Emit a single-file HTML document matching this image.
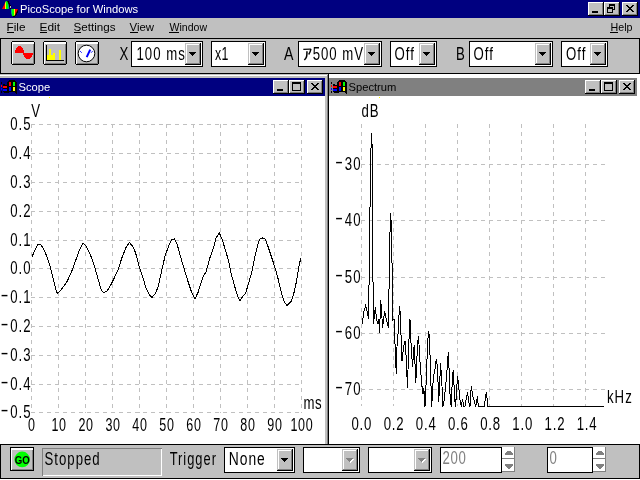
<!DOCTYPE html>
<html lang="en"><head><meta charset="utf-8"><title>PicoScope for Windows</title>
<style>
html,body{margin:0;padding:0;background:#fff;}
body{width:640px;height:480px;overflow:hidden;}
svg{display:block;font-family:'Liberation Sans', 'IPAGothic', 'Noto Sans CJK JP', sans-serif;}
text{white-space:pre;}
</style></head><body>
<svg width="640" height="480" viewBox="0 0 640 480">
<rect x="0" y="0" width="640" height="480" fill="#fff"/>
<rect x="0" y="0" width="640" height="18" fill="#000080"/>
<g shape-rendering="crispEdges">
<clipPath id="h1"><path d="M2 9 L3 7 L4 5 L5 3 L6 1 L7 1 L8 3 L9 6 L9 9 Z"/></clipPath>
<clipPath id="h2"><path d="M11 9 L18 9 L17 11 L16 13 L15 15 L14 16 L12 16 L11 13 Z"/></clipPath>
<path d="M7 1 L8 1 L9 2 L10 4 L11 6 L11 9 L18 9 L18 12 L17 14 L15 17 L13 17 L12 16 L16 10 L10 9 L9 5 Z" fill="#000"/>
<g clip-path="url(#h1)"><rect x="2" y="0" width="3" height="10" fill="#f00"/><rect x="5" y="0" width="1" height="10" fill="#ff0"/><rect x="6" y="0" width="2" height="10" fill="#0f0"/><rect x="8" y="0" width="1" height="10" fill="#0a8"/></g>
<g clip-path="url(#h2)"><rect x="11" y="8" width="1" height="10" fill="#0a8"/><rect x="12" y="8" width="2" height="10" fill="#0f0"/><rect x="14" y="8" width="1" height="10" fill="#ff0"/><rect x="15" y="8" width="3" height="10" fill="#f00"/></g>
<rect x="10" y="6" width="1" height="2" fill="#c0c0c0"/>
</g>
<g shape-rendering="crispEdges">
<rect x="588" y="2" width="16" height="14" fill="#000"/>
<rect x="588" y="2" width="15" height="13" fill="#fff"/>
<rect x="589" y="3" width="14" height="12" fill="#808080"/>
<rect x="589" y="3" width="13" height="11" fill="#c0c0c0"/>
<rect x="592" y="11" width="6" height="2" fill="#000"/>
<rect x="604" y="2" width="16" height="14" fill="#000"/>
<rect x="604" y="2" width="15" height="13" fill="#fff"/>
<rect x="605" y="3" width="14" height="12" fill="#808080"/>
<rect x="605" y="3" width="13" height="11" fill="#c0c0c0"/>
<rect x="609" y="4" width="6" height="6" fill="#000"/>
<rect x="610" y="6" width="4" height="3" fill="#c0c0c0"/>
<rect x="607" y="7" width="6" height="6" fill="#000"/>
<rect x="608" y="9" width="4" height="3" fill="#c0c0c0"/>
<rect x="622" y="2" width="16" height="14" fill="#000"/>
<rect x="622" y="2" width="15" height="13" fill="#fff"/>
<rect x="623" y="3" width="14" height="12" fill="#808080"/>
<rect x="623" y="3" width="13" height="11" fill="#c0c0c0"/>
<rect x="626" y="5" width="2" height="1" fill="#000"/>
<rect x="632" y="5" width="2" height="1" fill="#000"/>
<rect x="627" y="6" width="2" height="1" fill="#000"/>
<rect x="631" y="6" width="2" height="1" fill="#000"/>
<rect x="628" y="7" width="4" height="1" fill="#000"/>
<rect x="629" y="8" width="2" height="1" fill="#000"/>
<rect x="628" y="9" width="4" height="1" fill="#000"/>
<rect x="627" y="10" width="2" height="1" fill="#000"/>
<rect x="631" y="10" width="2" height="1" fill="#000"/>
<rect x="626" y="11" width="2" height="1" fill="#000"/>
<rect x="632" y="11" width="2" height="1" fill="#000"/>
</g>
<rect x="0" y="18" width="640" height="20" fill="#c0c0c0"/>
<rect x="7" y="32" width="7" height="1" fill="#000"/>
<rect x="40" y="32" width="7" height="1" fill="#000"/>
<rect x="74" y="32" width="7" height="1" fill="#000"/>
<rect x="130" y="32" width="8" height="1" fill="#000"/>
<rect x="169" y="32" width="10" height="1" fill="#000"/>
<rect x="610" y="32" width="8" height="1" fill="#000"/>
<g shape-rendering="crispEdges">
<rect x="0" y="38" width="640" height="36" fill="#000"/>
<rect x="1" y="39" width="638" height="34" fill="#c0c0c0"/>
<rect x="12" y="41" width="22" height="24" fill="#000"/>
<rect x="11" y="42" width="24" height="22" fill="#000"/>
<rect x="12" y="42" width="22" height="22" fill="#fff"/>
<rect x="13" y="44" width="21" height="20" fill="#808080"/>
<rect x="13" y="44" width="20" height="19" fill="#c0c0c0"/>
<rect x="44" y="41" width="22" height="24" fill="#000"/>
<rect x="43" y="42" width="24" height="22" fill="#000"/>
<rect x="44" y="42" width="22" height="22" fill="#fff"/>
<rect x="45" y="44" width="21" height="20" fill="#808080"/>
<rect x="45" y="44" width="20" height="19" fill="#c0c0c0"/>
<rect x="76" y="41" width="22" height="24" fill="#000"/>
<rect x="75" y="42" width="24" height="22" fill="#000"/>
<rect x="76" y="42" width="22" height="22" fill="#fff"/>
<rect x="77" y="44" width="21" height="20" fill="#808080"/>
<rect x="77" y="44" width="20" height="19" fill="#c0c0c0"/>
<path d="M15 53V50h1V48h1V47h1V46h3V47h1V48h1V50h1V53h9V55h-1V57h-1V58h-1V59h-4V58h-1V57h-1V55h-1V53z" fill="#f00"/>
<rect x="46" y="45" width="1" height="16" fill="#000"/>
<rect x="46" y="60" width="18" height="1" fill="#000"/>
<rect x="47" y="55" width="8" height="5" fill="#ff0"/>
<rect x="49" y="49" width="2" height="6" fill="#ff0"/>
<rect x="53" y="53" width="2" height="2" fill="#ff0"/>
<rect x="59" y="50" width="2" height="10" fill="#ff0"/>
</g>
<circle cx="86.5" cy="53.5" r="8.3" fill="#fff" stroke="#000" stroke-width="1"/>
<path d="M86.7 57.2L90.2 49.6" stroke="#00f" stroke-width="2" fill="none"/>
<path d="M80.2 51.2l1.5 1.5M92.6 51.2l-1.5 1.5" stroke="#00f" stroke-width="1" fill="none"/>
<g shape-rendering="crispEdges">
<rect x="131" y="41" width="72" height="26" fill="#000"/>
<rect x="132" y="42" width="70" height="24" fill="#fff"/>
<rect x="185" y="43" width="16" height="22" fill="#000"/>
<rect x="185" y="43" width="15" height="21" fill="#c0c0c0"/>
<rect x="186" y="44" width="14" height="20" fill="#808080"/>
<rect x="186" y="44" width="13" height="19" fill="#fff"/>
<rect x="187" y="45" width="12" height="18" fill="#c0c0c0"/>
<rect x="189" y="52" width="7" height="1" fill="#000"/>
<rect x="190" y="53" width="5" height="1" fill="#000"/>
<rect x="191" y="54" width="3" height="1" fill="#000"/>
<rect x="192" y="55" width="1" height="1" fill="#000"/>
<rect x="211" y="41" width="55" height="26" fill="#000"/>
<rect x="212" y="42" width="53" height="24" fill="#fff"/>
<rect x="248" y="43" width="16" height="22" fill="#000"/>
<rect x="248" y="43" width="15" height="21" fill="#c0c0c0"/>
<rect x="249" y="44" width="14" height="20" fill="#808080"/>
<rect x="249" y="44" width="13" height="19" fill="#fff"/>
<rect x="250" y="45" width="12" height="18" fill="#c0c0c0"/>
<rect x="252" y="52" width="7" height="1" fill="#000"/>
<rect x="253" y="53" width="5" height="1" fill="#000"/>
<rect x="254" y="54" width="3" height="1" fill="#000"/>
<rect x="255" y="55" width="1" height="1" fill="#000"/>
<rect x="298" y="41" width="84" height="26" fill="#000"/>
<rect x="299" y="42" width="82" height="24" fill="#fff"/>
<rect x="364" y="43" width="16" height="22" fill="#000"/>
<rect x="364" y="43" width="15" height="21" fill="#c0c0c0"/>
<rect x="365" y="44" width="14" height="20" fill="#808080"/>
<rect x="365" y="44" width="13" height="19" fill="#fff"/>
<rect x="366" y="45" width="12" height="18" fill="#c0c0c0"/>
<rect x="368" y="52" width="7" height="1" fill="#000"/>
<rect x="369" y="53" width="5" height="1" fill="#000"/>
<rect x="370" y="54" width="3" height="1" fill="#000"/>
<rect x="371" y="55" width="1" height="1" fill="#000"/>
<rect x="390" y="41" width="47" height="26" fill="#000"/>
<rect x="391" y="42" width="45" height="24" fill="#fff"/>
<rect x="419" y="43" width="16" height="22" fill="#000"/>
<rect x="419" y="43" width="15" height="21" fill="#c0c0c0"/>
<rect x="420" y="44" width="14" height="20" fill="#808080"/>
<rect x="420" y="44" width="13" height="19" fill="#fff"/>
<rect x="421" y="45" width="12" height="18" fill="#c0c0c0"/>
<rect x="423" y="52" width="7" height="1" fill="#000"/>
<rect x="424" y="53" width="5" height="1" fill="#000"/>
<rect x="425" y="54" width="3" height="1" fill="#000"/>
<rect x="426" y="55" width="1" height="1" fill="#000"/>
<rect x="469" y="41" width="84" height="26" fill="#000"/>
<rect x="470" y="42" width="82" height="24" fill="#fff"/>
<rect x="535" y="43" width="16" height="22" fill="#000"/>
<rect x="535" y="43" width="15" height="21" fill="#c0c0c0"/>
<rect x="536" y="44" width="14" height="20" fill="#808080"/>
<rect x="536" y="44" width="13" height="19" fill="#fff"/>
<rect x="537" y="45" width="12" height="18" fill="#c0c0c0"/>
<rect x="539" y="52" width="7" height="1" fill="#000"/>
<rect x="540" y="53" width="5" height="1" fill="#000"/>
<rect x="541" y="54" width="3" height="1" fill="#000"/>
<rect x="542" y="55" width="1" height="1" fill="#000"/>
<rect x="561" y="41" width="47" height="26" fill="#000"/>
<rect x="562" y="42" width="45" height="24" fill="#fff"/>
<rect x="590" y="43" width="16" height="22" fill="#000"/>
<rect x="590" y="43" width="15" height="21" fill="#c0c0c0"/>
<rect x="591" y="44" width="14" height="20" fill="#808080"/>
<rect x="591" y="44" width="13" height="19" fill="#fff"/>
<rect x="592" y="45" width="12" height="18" fill="#c0c0c0"/>
<rect x="594" y="52" width="7" height="1" fill="#000"/>
<rect x="595" y="53" width="5" height="1" fill="#000"/>
<rect x="596" y="54" width="3" height="1" fill="#000"/>
<rect x="597" y="55" width="1" height="1" fill="#000"/>
</g>
<g shape-rendering="crispEdges">
<rect x="329" y="78" width="308" height="18" fill="#808080"/>
<rect x="0" y="74" width="329" height="370" fill="#000"/>
<rect x="0" y="74" width="328" height="370" fill="#c0c0c0"/>
<rect x="0" y="75" width="327" height="369" fill="#fff"/>
<rect x="0" y="76" width="327" height="368" fill="#808080"/>
<rect x="0" y="76" width="327" height="368" fill="#c0c0c0"/>
<rect x="327" y="75" width="1" height="369" fill="#808080"/>
<rect x="0" y="75" width="327" height="1" fill="#fff"/>
<rect x="0" y="78" width="325" height="18" fill="#000080"/>
<rect x="0" y="96" width="325" height="348" fill="#fff"/>
<rect x="273" y="80" width="16" height="14" fill="#000"/>
<rect x="273" y="80" width="15" height="13" fill="#fff"/>
<rect x="274" y="81" width="14" height="12" fill="#808080"/>
<rect x="274" y="81" width="13" height="11" fill="#c0c0c0"/>
<rect x="277" y="89" width="6" height="2" fill="#000"/>
<rect x="289" y="80" width="16" height="14" fill="#000"/>
<rect x="289" y="80" width="15" height="13" fill="#fff"/>
<rect x="290" y="81" width="14" height="12" fill="#808080"/>
<rect x="290" y="81" width="13" height="11" fill="#c0c0c0"/>
<rect x="292" y="82" width="9" height="9" fill="#000"/>
<rect x="293" y="84" width="7" height="6" fill="#c0c0c0"/>
<rect x="307" y="80" width="16" height="14" fill="#000"/>
<rect x="307" y="80" width="15" height="13" fill="#fff"/>
<rect x="308" y="81" width="14" height="12" fill="#808080"/>
<rect x="308" y="81" width="13" height="11" fill="#c0c0c0"/>
<rect x="311" y="83" width="2" height="1" fill="#000"/>
<rect x="317" y="83" width="2" height="1" fill="#000"/>
<rect x="312" y="84" width="2" height="1" fill="#000"/>
<rect x="316" y="84" width="2" height="1" fill="#000"/>
<rect x="313" y="85" width="4" height="1" fill="#000"/>
<rect x="314" y="86" width="2" height="1" fill="#000"/>
<rect x="313" y="87" width="4" height="1" fill="#000"/>
<rect x="312" y="88" width="2" height="1" fill="#000"/>
<rect x="316" y="88" width="2" height="1" fill="#000"/>
<rect x="311" y="89" width="2" height="1" fill="#000"/>
<rect x="317" y="89" width="2" height="1" fill="#000"/>
<rect x="585" y="80" width="16" height="14" fill="#000"/>
<rect x="585" y="80" width="15" height="13" fill="#fff"/>
<rect x="586" y="81" width="14" height="12" fill="#808080"/>
<rect x="586" y="81" width="13" height="11" fill="#c0c0c0"/>
<rect x="589" y="89" width="6" height="2" fill="#000"/>
<rect x="601" y="80" width="16" height="14" fill="#000"/>
<rect x="601" y="80" width="15" height="13" fill="#fff"/>
<rect x="602" y="81" width="14" height="12" fill="#808080"/>
<rect x="602" y="81" width="13" height="11" fill="#c0c0c0"/>
<rect x="604" y="82" width="9" height="9" fill="#000"/>
<rect x="605" y="84" width="7" height="6" fill="#c0c0c0"/>
<rect x="619" y="80" width="16" height="14" fill="#000"/>
<rect x="619" y="80" width="15" height="13" fill="#fff"/>
<rect x="620" y="81" width="14" height="12" fill="#808080"/>
<rect x="620" y="81" width="13" height="11" fill="#c0c0c0"/>
<rect x="623" y="83" width="2" height="1" fill="#000"/>
<rect x="629" y="83" width="2" height="1" fill="#000"/>
<rect x="624" y="84" width="2" height="1" fill="#000"/>
<rect x="628" y="84" width="2" height="1" fill="#000"/>
<rect x="625" y="85" width="4" height="1" fill="#000"/>
<rect x="626" y="86" width="2" height="1" fill="#000"/>
<rect x="625" y="87" width="4" height="1" fill="#000"/>
<rect x="624" y="88" width="2" height="1" fill="#000"/>
<rect x="628" y="88" width="2" height="1" fill="#000"/>
<rect x="623" y="89" width="2" height="1" fill="#000"/>
<rect x="629" y="89" width="2" height="1" fill="#000"/>
<path d="M7 82L8 81L10 80L14 80L15 81L17 82V94L15 93L14 92L10 92L8 93L7 93Z" fill="#000"/>
<rect x="9" y="82" width="2" height="4" fill="#f00"/>
<rect x="13" y="82" width="2" height="4" fill="#0f0"/>
<rect x="9" y="87" width="2" height="4" fill="#00f"/>
<rect x="13" y="87" width="2" height="4" fill="#ff0"/>
<rect x="3" y="84" width="4" height="9" fill="#000"/>
<rect x="3" y="86" width="4" height="2" fill="#f00"/>
<rect x="3" y="89" width="4" height="2" fill="#00f"/>
<rect x="5" y="84" width="2" height="1" fill="#000080"/>
<rect x="3" y="92" width="1" height="1" fill="#000080"/>
<rect x="1" y="85" width="1" height="2" fill="#f00"/>
<rect x="1" y="88" width="1" height="2" fill="#00f"/>
<rect x="1" y="82" width="1" height="2" fill="#000"/>
<rect x="1" y="91" width="1" height="2" fill="#000"/>
<path d="M337 82L338 81L340 80L344 80L345 81L347 82V94L345 93L344 92L340 92L338 93L337 93Z" fill="#000"/>
<rect x="339" y="82" width="2" height="4" fill="#f00"/>
<rect x="343" y="82" width="2" height="4" fill="#0f0"/>
<rect x="339" y="87" width="2" height="4" fill="#00f"/>
<rect x="343" y="87" width="2" height="4" fill="#ff0"/>
<rect x="333" y="84" width="4" height="9" fill="#000"/>
<rect x="333" y="86" width="4" height="2" fill="#f00"/>
<rect x="333" y="89" width="4" height="2" fill="#00f"/>
<rect x="335" y="84" width="2" height="1" fill="#808080"/>
<rect x="333" y="92" width="1" height="1" fill="#808080"/>
<rect x="331" y="85" width="1" height="2" fill="#f00"/>
<rect x="331" y="88" width="1" height="2" fill="#00f"/>
<rect x="331" y="82" width="1" height="2" fill="#000"/>
<rect x="331" y="91" width="1" height="2" fill="#000"/>
</g>
<g shape-rendering="crispEdges" stroke="#c0c0c0" stroke-width="1" fill="none" stroke-dasharray="4 4">
<path d="M31.5 124V413"/>
<path d="M58.5 124V413"/>
<path d="M85.5 124V413"/>
<path d="M112.5 124V413"/>
<path d="M139.5 124V413"/>
<path d="M166.5 124V413"/>
<path d="M193.5 124V413"/>
<path d="M220.5 124V413"/>
<path d="M247.5 124V413"/>
<path d="M274.5 124V413"/>
<path d="M301.5 124V413"/>
<path d="M31 124.5H302"/>
<path d="M31 153.5H302"/>
<path d="M31 182.5H302"/>
<path d="M31 211.5H302"/>
<path d="M31 240.5H302"/>
<path d="M31 268.5H302"/>
<path d="M31 297.5H302"/>
<path d="M31 326.5H302"/>
<path d="M31 355.5H302"/>
<path d="M31 384.5H302"/>
<path d="M31 412.5H302"/>
</g>
<polyline shape-rendering="crispEdges" fill="none" stroke="#000" stroke-width="1" points="31.75,257.5 35.5,248.75 38,244.5 40.5,244.25 43,248 46.25,255 50,266.25 53.75,281.25 57,293.25 60,291.25 63.75,286.25 67.5,280.75 71.75,271.25 76.25,258.75 80,248.75 83,243.25 86.25,246.25 90,253.75 93.75,263.75 98,278.75 101.25,290 103.75,292.5 107,291.25 110.5,285.5 114.5,277.5 118,270 122,257.5 126.25,247 129.5,242.5 132.5,246.25 135.5,252.5 138.75,265 142.5,276.25 146.25,288.75 149.5,295 152,297.5 155,293.75 158,287.5 161.25,272.5 165,256.25 168.75,245.5 172,239.5 174.5,239 177,243.75 180,255 183.75,267.5 187.5,280 191.25,291.25 195,298.75 198,292.5 201.25,282.5 203,277 206.25,271.25 210,257.5 213,249.5 216.25,237.5 219.25,233 222,238.75 225,248.75 228,258.75 231.25,273.75 235,287.5 238,297 240,300.5 243,296.25 245.5,293.75 248.75,282.5 252,271.25 255,256.25 258,243.75 260,238.75 262.5,238 265,238.75 267.5,245 270,252.5 273.75,263.75 277.5,276.25 281.25,292.5 284.5,302.5 287,305.5 291.25,301.25 293.75,293.75 296.25,282.5 298.75,267.5 300.75,258"/>
<g shape-rendering="crispEdges" stroke="#c0c0c0" stroke-width="1" fill="none" stroke-dasharray="4 4">
<path d="M361.5 124V406"/>
<path d="M393.5 124V406"/>
<path d="M425.5 124V406"/>
<path d="M457.5 124V406"/>
<path d="M489.5 124V406"/>
<path d="M521.5 124V406"/>
<path d="M553.5 124V406"/>
<path d="M585.5 124V406"/>
<path d="M361 164.5H605"/>
<path d="M361 220.5H605"/>
<path d="M361 277.5H605"/>
<path d="M361 333.5H605"/>
<path d="M361 389.5H605"/>
</g>
<polyline shape-rendering="crispEdges" fill="none" stroke="#000" stroke-width="1" points="362.25,323.75 363.75,311.9 365.6,305.6 367,311 368.5,318.1"/>
<polyline shape-rendering="crispEdges" fill="none" stroke="#000" stroke-width="1" points="373.5,323.1 375.25,307.5 376.5,318.7 377.5,322.5 378.7,320 379.6,332.5 380.6,300.25 381.5,308 382.5,328.1 384.6,311.5 386.5,320 388.5,327.25"/>
<polyline shape-rendering="crispEdges" fill="none" stroke="#000" stroke-width="1" points="392.5,320.6 394,318.75 394.4,342.5 395.3,344.75 396.2,374.2 397,346.7 398.3,330 399.4,306.5 400.2,312 401,335 402,360.8 403.7,346.7 405,340.8 405.8,350 407.5,387.5 408.7,345 410,319.4 410.8,340 412.5,366.7 414.2,345 415.8,383.3 417.5,345 418.5,335.6 420,361.7 421.7,384 423,394 423.8,388 425,406.5 426.7,370 427.5,343.3 428.7,331.3 429.6,340 430.3,365 431.7,406.5 433.3,378.3 435,369 436.3,359 437.5,367 438.7,401.7 439.7,385 440.5,363.3 441.7,380 443,406.5 444.2,400 445.8,385 447,370 448.3,352.5 449.2,372 450.3,401.7 451.3,406.5 452.5,373.3 453.3,371.7 454.2,388 455.3,406.5 456.3,396.7 457.5,375.8 458.7,386.7 460,400 461.3,406.5 462.5,399 463.7,406.5 465,406.5 466.3,398.3 467.5,392.5 468.7,401.7 470,406.5 471.3,385.8 472.5,395 474.2,400.8 475.8,406.5 477.5,395.8 478.3,406.5 484.2,406.5 486.3,391.7 488,406.5 604,406.5"/>
<g shape-rendering="crispEdges">
<rect x="371" y="133" width="1" height="15" fill="#000"/>
<rect x="372" y="144" width="1" height="138" fill="#000"/>
<rect x="373" y="282" width="1" height="42" fill="#000"/>
<rect x="370" y="148" width="1" height="59" fill="#000"/>
<rect x="369" y="207" width="1" height="78" fill="#000"/>
<rect x="368" y="285" width="1" height="34" fill="#000"/>
<rect x="390" y="213" width="1" height="19" fill="#000"/>
<rect x="391" y="220" width="1" height="43" fill="#000"/>
<rect x="392" y="263" width="1" height="58" fill="#000"/>
<rect x="389" y="232" width="1" height="57" fill="#000"/>
<rect x="388" y="289" width="1" height="39" fill="#000"/>
</g>
<g shape-rendering="crispEdges">
<rect x="0" y="444" width="640" height="35" fill="#000"/>
<rect x="1" y="445" width="638" height="33" fill="#c0c0c0"/>
<rect x="10" y="447" width="24" height="24" fill="#000"/>
<rect x="11" y="448" width="22" height="22" fill="#fff"/>
<rect x="12" y="450" width="21" height="20" fill="#808080"/>
<rect x="12" y="450" width="20" height="19" fill="#c0c0c0"/>
<rect x="42" y="448" width="120" height="28" fill="#808080"/>
<rect x="43" y="449" width="119" height="27" fill="#fff"/>
<rect x="43" y="449" width="118" height="26" fill="#c0c0c0"/>
<rect x="224" y="447" width="71" height="26" fill="#000"/>
<rect x="225" y="448" width="69" height="24" fill="#fff"/>
<rect x="277" y="449" width="16" height="22" fill="#000"/>
<rect x="277" y="449" width="15" height="21" fill="#c0c0c0"/>
<rect x="278" y="450" width="14" height="20" fill="#808080"/>
<rect x="278" y="450" width="13" height="19" fill="#fff"/>
<rect x="279" y="451" width="12" height="18" fill="#c0c0c0"/>
<rect x="281" y="458" width="7" height="1" fill="#000"/>
<rect x="282" y="459" width="5" height="1" fill="#000"/>
<rect x="283" y="460" width="3" height="1" fill="#000"/>
<rect x="284" y="461" width="1" height="1" fill="#000"/>
<rect x="303" y="447" width="57" height="26" fill="#000"/>
<rect x="304" y="448" width="55" height="24" fill="#fff"/>
<rect x="342" y="449" width="16" height="22" fill="#000"/>
<rect x="342" y="449" width="15" height="21" fill="#c0c0c0"/>
<rect x="343" y="450" width="14" height="20" fill="#808080"/>
<rect x="343" y="450" width="13" height="19" fill="#fff"/>
<rect x="344" y="451" width="12" height="18" fill="#c0c0c0"/>
<rect x="347" y="459" width="7" height="1" fill="#fff"/>
<rect x="348" y="460" width="5" height="1" fill="#fff"/>
<rect x="349" y="461" width="3" height="1" fill="#fff"/>
<rect x="350" y="462" width="1" height="1" fill="#fff"/>
<rect x="346" y="458" width="7" height="1" fill="#808080"/>
<rect x="347" y="459" width="5" height="1" fill="#808080"/>
<rect x="348" y="460" width="3" height="1" fill="#808080"/>
<rect x="349" y="461" width="1" height="1" fill="#808080"/>
<rect x="368" y="447" width="64" height="26" fill="#000"/>
<rect x="369" y="448" width="62" height="24" fill="#fff"/>
<rect x="414" y="449" width="16" height="22" fill="#000"/>
<rect x="414" y="449" width="15" height="21" fill="#c0c0c0"/>
<rect x="415" y="450" width="14" height="20" fill="#808080"/>
<rect x="415" y="450" width="13" height="19" fill="#fff"/>
<rect x="416" y="451" width="12" height="18" fill="#c0c0c0"/>
<rect x="419" y="459" width="7" height="1" fill="#fff"/>
<rect x="420" y="460" width="5" height="1" fill="#fff"/>
<rect x="421" y="461" width="3" height="1" fill="#fff"/>
<rect x="422" y="462" width="1" height="1" fill="#fff"/>
<rect x="418" y="458" width="7" height="1" fill="#808080"/>
<rect x="419" y="459" width="5" height="1" fill="#808080"/>
<rect x="420" y="460" width="3" height="1" fill="#808080"/>
<rect x="421" y="461" width="1" height="1" fill="#808080"/>
<rect x="440" y="447" width="62" height="26" fill="#000"/>
<rect x="441" y="448" width="60" height="24" fill="#fff"/>
<rect x="547" y="447" width="46" height="26" fill="#000"/>
<rect x="548" y="448" width="44" height="24" fill="#fff"/>
<rect x="502" y="447" width="13" height="12" fill="#808080"/>
<rect x="502" y="447" width="12" height="11" fill="#fff"/>
<rect x="502" y="459" width="13" height="13" fill="#808080"/>
<rect x="502" y="459" width="12" height="12" fill="#fff"/>
<rect x="507" y="451" width="4" height="1" fill="#808080"/>
<rect x="506" y="452" width="6" height="1" fill="#808080"/>
<rect x="505" y="453" width="8" height="1" fill="#808080"/>
<rect x="505" y="454" width="8" height="1" fill="#808080"/>
<rect x="505" y="464" width="8" height="1" fill="#808080"/>
<rect x="505" y="465" width="8" height="1" fill="#808080"/>
<rect x="506" y="466" width="6" height="1" fill="#808080"/>
<rect x="507" y="467" width="4" height="1" fill="#808080"/>
<rect x="508" y="468" width="2" height="1" fill="#808080"/>
<rect x="593" y="447" width="13" height="12" fill="#808080"/>
<rect x="593" y="447" width="12" height="11" fill="#fff"/>
<rect x="593" y="459" width="13" height="13" fill="#808080"/>
<rect x="593" y="459" width="12" height="12" fill="#fff"/>
<rect x="598" y="451" width="4" height="1" fill="#808080"/>
<rect x="597" y="452" width="6" height="1" fill="#808080"/>
<rect x="596" y="453" width="8" height="1" fill="#808080"/>
<rect x="596" y="454" width="8" height="1" fill="#808080"/>
<rect x="596" y="464" width="8" height="1" fill="#808080"/>
<rect x="596" y="465" width="8" height="1" fill="#808080"/>
<rect x="597" y="466" width="6" height="1" fill="#808080"/>
<rect x="598" y="467" width="4" height="1" fill="#808080"/>
<rect x="599" y="468" width="2" height="1" fill="#808080"/>
</g>
<rect x="49" y="97" width="1" height="1" fill="#ff0"/>
<rect x="379" y="97" width="1" height="1" fill="#ff0"/>
<circle cx="22.2" cy="459.4" r="7.8" fill="#0f0"/>
<filter id="gs" x="0" y="0" width="100%" height="100%" filterUnits="userSpaceOnUse"><feColorMatrix type="saturate" values="0"/></filter>
<g filter="url(#gs)">
<text x="20" y="13" font-size="11.2" fill="#fff">PicoScope for Windows</text>
<text x="6.5" y="31" font-size="11.2" fill="#000" textLength="19" lengthAdjust="spacingAndGlyphs">File</text>
<text x="39.5" y="31" font-size="11.2" fill="#000" textLength="20.5" lengthAdjust="spacingAndGlyphs">Edit</text>
<text x="73.5" y="31" font-size="11.2" fill="#000" textLength="42" lengthAdjust="spacingAndGlyphs">Settings</text>
<text x="129.5" y="31" font-size="11.2" fill="#000" textLength="24.5" lengthAdjust="spacingAndGlyphs">View</text>
<text x="169.5" y="31" font-size="11.2" fill="#000" textLength="37.5" lengthAdjust="spacingAndGlyphs">Window</text>
<text x="610.5" y="31" font-size="11.2" fill="#000" textLength="22" lengthAdjust="spacingAndGlyphs">Help</text>
<text transform="translate(119.5 60) scale(0.714 1)" font-size="18.5" fill="#000" letter-spacing="1.401">X</text>
<text transform="translate(136.5 60) scale(0.714 1)" font-size="18.5" fill="#000" letter-spacing="1.401">100 ms</text>
<text transform="translate(215 60) scale(0.669 1)" font-size="18.5" fill="#000" letter-spacing="0.448">x1</text>
<text transform="translate(284 60) scale(0.7664 1)" font-size="18.5" fill="#000" letter-spacing="1.305">A</text>
<text transform="translate(302.3 60) scale(0.714 1)" font-size="18.5" fill="#000" letter-spacing="1.401"><tspan font-size="16.5" dy="-0.5" letter-spacing="0" textLength="14.5" lengthAdjust="spacingAndGlyphs">ｱ</tspan><tspan dy="0.5">500 mV</tspan></text>
<text transform="translate(394.5 60) scale(0.714 1)" font-size="18.5" fill="#000" letter-spacing="1.401">Off</text>
<text transform="translate(456 60) scale(0.714 1)" font-size="18.5" fill="#000" letter-spacing="1.401">B</text>
<text transform="translate(473.5 60) scale(0.714 1)" font-size="18.5" fill="#000" letter-spacing="1.401">Off</text>
<text transform="translate(566 60) scale(0.714 1)" font-size="18.5" fill="#000" letter-spacing="1.401">Off</text>
<text x="18.5" y="91" font-size="11.2" fill="#fff">Scope</text>
<text x="348.5" y="91" font-size="11.2" fill="#000">Spectrum</text>
<text transform="translate(31.6 129.9) scale(0.714 1)" font-size="18.5" fill="#000" letter-spacing="1.401" text-anchor="end">0.5</text>
<text transform="translate(31.6 158.9) scale(0.714 1)" font-size="18.5" fill="#000" letter-spacing="1.401" text-anchor="end">0.4</text>
<text transform="translate(31.6 187.9) scale(0.714 1)" font-size="18.5" fill="#000" letter-spacing="1.401" text-anchor="end">0.3</text>
<text transform="translate(31.6 216.9) scale(0.714 1)" font-size="18.5" fill="#000" letter-spacing="1.401" text-anchor="end">0.2</text>
<text transform="translate(31.6 245.9) scale(0.714 1)" font-size="18.5" fill="#000" letter-spacing="1.401" text-anchor="end">0.1</text>
<text transform="translate(31.6 273.9) scale(0.714 1)" font-size="18.5" fill="#000" letter-spacing="1.401" text-anchor="end">0.0</text>
<text transform="translate(31.6 302.9) scale(0.714 1)" font-size="18.5" fill="#000" letter-spacing="1.401" text-anchor="end"><tspan dy="-2.2" textLength="13.8" lengthAdjust="spacingAndGlyphs">-</tspan><tspan dy="2.2">0.1</tspan></text>
<text transform="translate(31.6 331.9) scale(0.714 1)" font-size="18.5" fill="#000" letter-spacing="1.401" text-anchor="end"><tspan dy="-2.2" textLength="13.8" lengthAdjust="spacingAndGlyphs">-</tspan><tspan dy="2.2">0.2</tspan></text>
<text transform="translate(31.6 360.9) scale(0.714 1)" font-size="18.5" fill="#000" letter-spacing="1.401" text-anchor="end"><tspan dy="-2.2" textLength="13.8" lengthAdjust="spacingAndGlyphs">-</tspan><tspan dy="2.2">0.3</tspan></text>
<text transform="translate(31.6 389.9) scale(0.714 1)" font-size="18.5" fill="#000" letter-spacing="1.401" text-anchor="end"><tspan dy="-2.2" textLength="13.8" lengthAdjust="spacingAndGlyphs">-</tspan><tspan dy="2.2">0.4</tspan></text>
<text transform="translate(31.6 417.9) scale(0.714 1)" font-size="18.5" fill="#000" letter-spacing="1.401" text-anchor="end"><tspan dy="-2.2" textLength="13.8" lengthAdjust="spacingAndGlyphs">-</tspan><tspan dy="2.2">0.5</tspan></text>
<text transform="translate(31.9 431) scale(0.6772 1)" font-size="18.5" fill="#000" letter-spacing="0.886" text-anchor="middle">0</text>
<text transform="translate(59.0 431) scale(0.6772 1)" font-size="18.5" fill="#000" letter-spacing="0.886" text-anchor="middle">10</text>
<text transform="translate(86.0 431) scale(0.6772 1)" font-size="18.5" fill="#000" letter-spacing="0.886" text-anchor="middle">20</text>
<text transform="translate(113.0 431) scale(0.6772 1)" font-size="18.5" fill="#000" letter-spacing="0.886" text-anchor="middle">30</text>
<text transform="translate(139.9 431) scale(0.6772 1)" font-size="18.5" fill="#000" letter-spacing="0.886" text-anchor="middle">40</text>
<text transform="translate(166.9 431) scale(0.6772 1)" font-size="18.5" fill="#000" letter-spacing="0.886" text-anchor="middle">50</text>
<text transform="translate(193.9 431) scale(0.6772 1)" font-size="18.5" fill="#000" letter-spacing="0.886" text-anchor="middle">60</text>
<text transform="translate(220.9 431) scale(0.6772 1)" font-size="18.5" fill="#000" letter-spacing="0.886" text-anchor="middle">70</text>
<text transform="translate(247.9 431) scale(0.6772 1)" font-size="18.5" fill="#000" letter-spacing="0.886" text-anchor="middle">80</text>
<text transform="translate(274.9 431) scale(0.6772 1)" font-size="18.5" fill="#000" letter-spacing="0.886" text-anchor="middle">90</text>
<text transform="translate(301.9 431) scale(0.6772 1)" font-size="18.5" fill="#000" letter-spacing="0.886" text-anchor="middle">100</text>
<text transform="translate(31.2 117) scale(0.714 1)" font-size="18.5" fill="#000" letter-spacing="1.401">V</text>
<text transform="translate(303.6 409) scale(0.714 1)" font-size="18.5" fill="#000" letter-spacing="0.7">ms</text>
<text transform="translate(361.5 169.9) scale(0.714 1)" font-size="18.5" fill="#000" letter-spacing="1.401" text-anchor="end"><tspan dy="-2.2" textLength="13.8" lengthAdjust="spacingAndGlyphs">-</tspan><tspan dy="2.2">30</tspan></text>
<text transform="translate(361.5 225.9) scale(0.714 1)" font-size="18.5" fill="#000" letter-spacing="1.401" text-anchor="end"><tspan dy="-2.2" textLength="13.8" lengthAdjust="spacingAndGlyphs">-</tspan><tspan dy="2.2">40</tspan></text>
<text transform="translate(361.5 282.9) scale(0.714 1)" font-size="18.5" fill="#000" letter-spacing="1.401" text-anchor="end"><tspan dy="-2.2" textLength="13.8" lengthAdjust="spacingAndGlyphs">-</tspan><tspan dy="2.2">50</tspan></text>
<text transform="translate(361.5 338.9) scale(0.714 1)" font-size="18.5" fill="#000" letter-spacing="1.401" text-anchor="end"><tspan dy="-2.2" textLength="13.8" lengthAdjust="spacingAndGlyphs">-</tspan><tspan dy="2.2">60</tspan></text>
<text transform="translate(361.5 394.9) scale(0.714 1)" font-size="18.5" fill="#000" letter-spacing="1.401" text-anchor="end"><tspan dy="-2.2" textLength="13.8" lengthAdjust="spacingAndGlyphs">-</tspan><tspan dy="2.2">70</tspan></text>
<text transform="translate(361.8 430) scale(0.714 1)" font-size="18.5" fill="#000" letter-spacing="1.12" text-anchor="middle">0.0</text>
<text transform="translate(394.0 430) scale(0.714 1)" font-size="18.5" fill="#000" letter-spacing="1.12" text-anchor="middle">0.2</text>
<text transform="translate(426.2 430) scale(0.714 1)" font-size="18.5" fill="#000" letter-spacing="1.12" text-anchor="middle">0.4</text>
<text transform="translate(458.3 430) scale(0.714 1)" font-size="18.5" fill="#000" letter-spacing="1.12" text-anchor="middle">0.6</text>
<text transform="translate(490.5 430) scale(0.714 1)" font-size="18.5" fill="#000" letter-spacing="1.12" text-anchor="middle">0.8</text>
<text transform="translate(522.7 430) scale(0.714 1)" font-size="18.5" fill="#000" letter-spacing="1.12" text-anchor="middle">1.0</text>
<text transform="translate(554.9 430) scale(0.714 1)" font-size="18.5" fill="#000" letter-spacing="1.12" text-anchor="middle">1.2</text>
<text transform="translate(587.1 430) scale(0.714 1)" font-size="18.5" fill="#000" letter-spacing="1.12" text-anchor="middle">1.4</text>
<text transform="translate(361.5 117) scale(0.714 1)" font-size="18.5" fill="#000" letter-spacing="1.401">dB</text>
<text transform="translate(607 403) scale(0.714 1)" font-size="18.5" fill="#000" letter-spacing="1.401">kHz</text>
<text transform="translate(22.3 463.6) scale(0.82 1)" font-size="11.8" fill="#000" text-anchor="middle" font-weight="bold">GO</text>
<text transform="translate(44.5 465) scale(0.714 1)" font-size="18.5" fill="#000" letter-spacing="1.401">Stopped</text>
<text transform="translate(169.7 465) scale(0.6956 1)" font-size="18.5" fill="#000" letter-spacing="1.438">Trigger</text>
<text transform="translate(228.7 465) scale(0.7489 1)" font-size="18.5" fill="#000" letter-spacing="1.335">None</text>
<text transform="translate(442.5 464) scale(0.714 1)" font-size="18.5" fill="#808080" letter-spacing="0.84">200</text>
<text transform="translate(549.5 464) scale(0.714 1)" font-size="18.5" fill="#808080" letter-spacing="1.401">0</text>
</g>
</svg>
</body></html>
